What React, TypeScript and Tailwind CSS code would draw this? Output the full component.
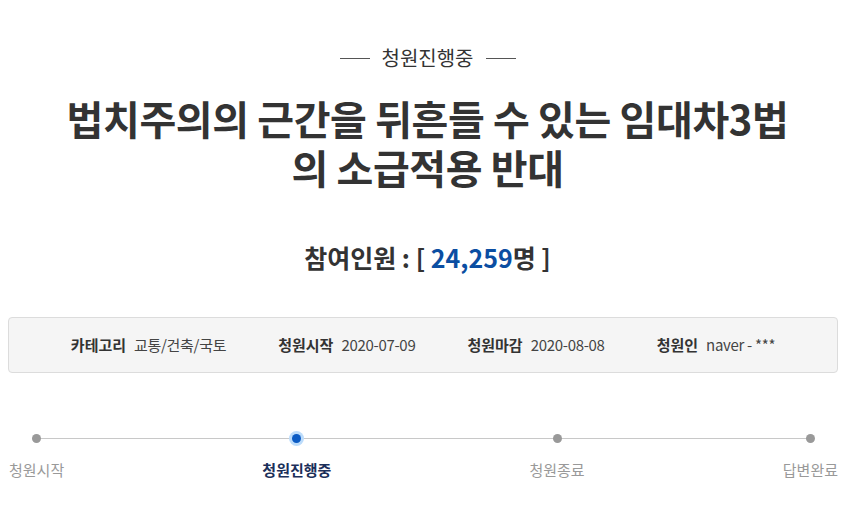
const font = { fontFamily: "'Noto Sans CJK KR', 'Noto Sans', sans-serif" };

const info = [
  { label: "카테고리", value: "교통/건축/국토" },
  { label: "청원시작", value: "2020-07-09" },
  { label: "청원마감", value: "2020-08-08" },
  { label: "청원인", value: "naver - ***" },
];

const steps = [
  { name: "청원시작", active: false },
  { name: "청원진행중", active: true },
  { name: "청원종료", active: false },
  { name: "답변완료", active: false },
];

const App = () => {
  return (
    <div className="w-[855px] h-[513px] bg-white text-[#333] overflow-hidden" style={font}>
      <div className="flex items-center justify-center gap-3 pt-[44px]">
        <span className="w-[30px] h-px bg-[#555]" />
        <span className="text-[20px] leading-[28px] text-[#333]">청원진행중</span>
        <span className="w-[30px] h-px bg-[#555]" />
      </div>

      <h1 className="mt-[22px] text-center text-[40px] leading-[49px] font-bold text-[#333] tracking-[-0.4px]">
        <span className="block">법치주의의 근간을 뒤흔들 수 있는 임대차3법</span>
        <span className="block">의 소급적용 반대</span>
      </h1>

      <div className="mt-[48px] text-center text-[25px] leading-[34px] font-bold">
        참여인원 : [ <span className="text-[#0b4ea2]">24,259</span>명 ]
      </div>

      <div className="ml-[8px] mr-[17px] mt-[43px] h-[56px] rounded border border-[#dcdcdc] bg-[#f5f5f5] flex items-center justify-center gap-[52px]">
        {info.map((it) => (
          <div key={it.label} className="flex items-center gap-2 text-[15px]">
            <span className="font-bold text-[#333]">{it.label}</span>
            <span className="text-[#444] tracking-[-0.3px]">{it.value}</span>
          </div>
        ))}
      </div>

      <div className="relative mt-[58px] ml-[9px] mr-[17px] flex justify-between">
        <div className="absolute left-[28px] right-[28px] top-[7px] h-px bg-[#c8c8c8]" />
        {steps.map((s) => (
          <div key={s.name} className="relative flex flex-col items-center">
            <div className="h-[15px] flex items-center justify-center">
              {s.active ? (
                <span className="w-[15px] h-[15px] rounded-full bg-[#bcdcfb] flex items-center justify-center">
                  <span className="w-[9px] h-[9px] rounded-full bg-[#0b5bc4]" />
                </span>
              ) : (
                <span className="w-[9px] h-[9px] rounded-full bg-[#999]" />
              )}
            </div>
            <span
              className={
                s.active
                  ? "mt-[13px] text-[15px] font-bold text-[#1b2f5a]"
                  : "mt-[13px] text-[15px] text-[#999]"
              }
            >
              {s.name}
            </span>
          </div>
        ))}
      </div>
    </div>
  );
};

export default App;
